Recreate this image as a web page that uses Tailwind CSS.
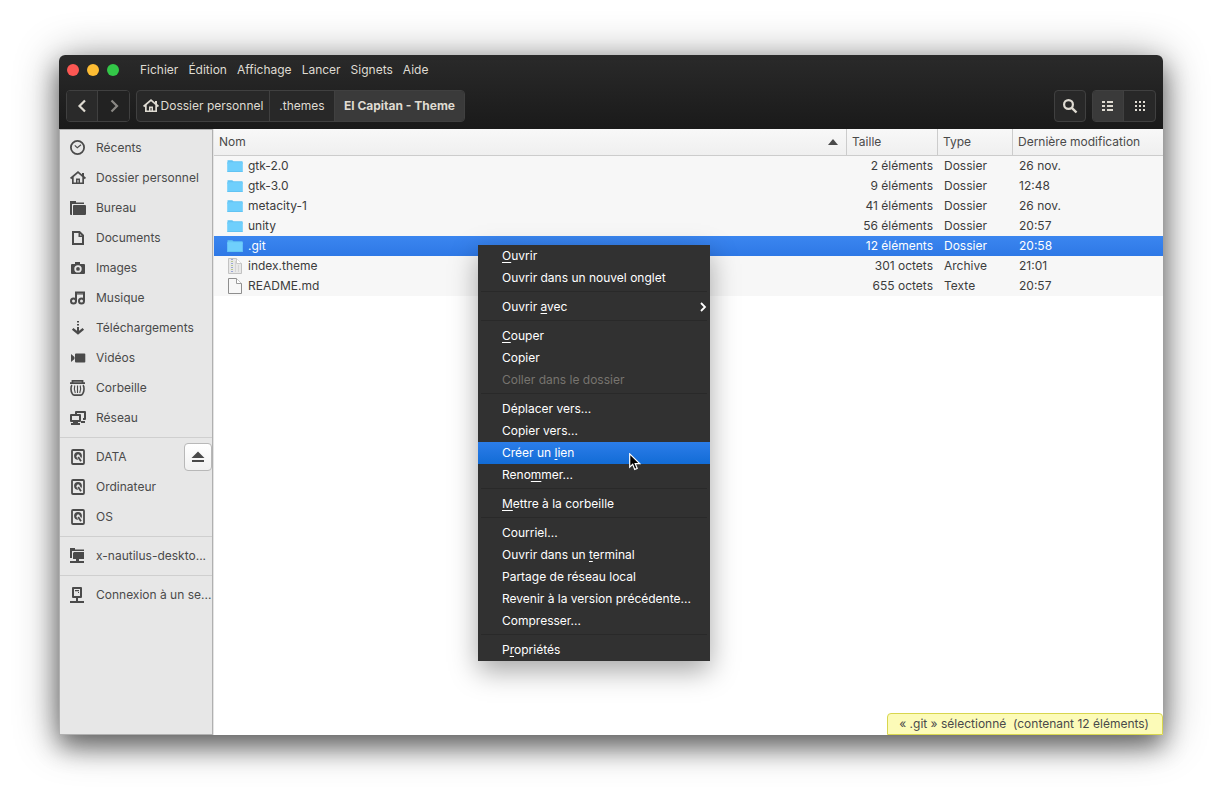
<!DOCTYPE html>
<html lang="fr">
<head>
<meta charset="utf-8">
<title>El Capitan - Theme</title>
<script src="https://cdn.jsdelivr.net/npm/@tailwindcss/browser@4"></script>
</head>
<body class="bg-white">
<!-- Shared symbolic icons -->
<svg class="hidden" aria-hidden="true">
  <symbol id="home" viewBox="0 0 16 16"><path fill="currentColor" fill-rule="evenodd" d="M8 1 0 7.800 1.200 9.200 2 8.500V14h12V8.500l.8.7L16 7.800 14 6.100V3h-2v1.400zM8 3.300l4.300 3.700v5.400H10V8.500H6v3.900H3.700V7zM7.500 10h1v2.400h-1z"/></symbol>
  <symbol id="clock" viewBox="0 0 16 16"><circle cx="7.500" cy="7.500" r="6.600" fill="none" stroke="currentColor" stroke-width="1.800"/><path d="M4.800 5.300 7.300 7.800 11 4.800" fill="none" stroke="currentColor" stroke-width="1.200"/></symbol>
  <symbol id="desk" viewBox="0 0 16 16"><path fill="currentColor" d="M0 1h6v1.500h8V4H2v11H1a1 1 0 0 1-1-1zM4 5h11a1 1 0 0 1 1 1v8a1 1 0 0 1-1 1H3V6a1 1 0 0 1 1-1z"/></symbol>
  <symbol id="doc" viewBox="0 0 16 16"><path d="M3 2h6.500L13 5.500V14H3z" fill="none" stroke="currentColor" stroke-width="2"/><path fill="currentColor" d="M8.500 1H10v4.500h4V7H8.500z"/></symbol>
  <symbol id="cam" viewBox="0 0 16 16"><path fill="currentColor" fill-rule="evenodd" d="M5 2h5v2h4a1 1 0 0 1 1 1v8a1 1 0 0 1-1 1H2a1 1 0 0 1-1-1V5a1 1 0 0 1 1-1h3zM8 5.200a3.700 3.700 0 1 0 0 7.400 3.700 3.700 0 0 0 0-7.400z"/><circle cx="8" cy="8.900" r="1.900" fill="currentColor"/></symbol>
  <symbol id="music" viewBox="0 0 16 16"><path fill="none" stroke="currentColor" stroke-width="2" d="M6 11V2.500h8V11"/><path fill="none" stroke="currentColor" d="M6 4h8"/><circle cx="3.500" cy="11" r="2.500" fill="none" stroke="currentColor" stroke-width="2"/><circle cx="11.500" cy="11" r="2.500" fill="none" stroke="currentColor" stroke-width="2"/></symbol>
  <symbol id="down" viewBox="0 0 16 16"><path fill="currentColor" d="M7 1h2v1.500H7zM7 4h2v1.500H7zM7 7h2v5H7z"/><path d="M2.700 8.800 8 13.200l5.300-4.400" fill="none" stroke="currentColor" stroke-width="2.400"/></symbol>
  <symbol id="video" viewBox="0 0 16 16"><path fill="currentColor" d="M6 3.500h8.500a.8.8 0 0 1 .8.8v7.400a.8.8 0 0 1-.8.8H6a1 1 0 0 1-1-1v-7a1 1 0 0 1 1-1zM1 4l3.500 3v2L1 12z"/></symbol>
  <symbol id="trash" viewBox="0 0 16 16"><path fill="none" stroke="currentColor" stroke-width="1.800" d="M0 3.200h15M2.500 3V.9h10V3"/><path fill="none" stroke="currentColor" stroke-width="1.600" d="M2 5.200C.6 6.500.6 11 2.200 13.600c.5.900 1 1.500 2 1.500h6.600c1 0 1.500-.6 2-1.500C14.400 11 14.400 6.500 13 5.200"/><path fill="none" stroke="currentColor" stroke-width="1.100" d="M4.800 5.500c-.8 2.500-.8 5 .5 7.500M7.500 5.500V13M10.200 5.500c.8 2.500.8 5-.5 7.500"/></symbol>
  <symbol id="net" viewBox="0 0 16 16"><path fill="currentColor" fill-rule="evenodd" d="M6 1h9a1 1 0 0 1 1 1v7a1 1 0 0 1-1 1h-2V8h1V3H7v1H5V2a1 1 0 0 1 1-1zM1 4h9a1 1 0 0 1 1 1v6a1 1 0 0 1-1 1H8v1h2v2H1v-2h2v-1H1a1 1 0 0 1-1-1V5a1 1 0 0 1 1-1zm1 2v4h7V6zM11 11h4v2h-4z"/></symbol>
  <symbol id="disk" viewBox="0 0 16 16"><rect x="2" y="1" width="12" height="14" rx="1" fill="none" stroke="currentColor" stroke-width="1.800"/><circle cx="8" cy="6.800" r="3.900" fill="currentColor"/><path d="M7.500 6.500 11.500 12.500" stroke="#e7e7e7" stroke-width="3.200"/><circle cx="8" cy="6.800" r="1.300" fill="#e7e7e7"/><path d="M8.200 8 11 12.300" stroke="currentColor" stroke-width="1.800"/></symbol>
  <symbol id="share" viewBox="0 0 16 16"><path fill="currentColor" d="M0 0h5v1.500h9V3H2v7H0zM4 4h10v7H9v2h5v2H0v-2h6v-2H3V5z"/></symbol>
  <symbol id="server" viewBox="0 0 16 16"><path fill="currentColor" fill-rule="evenodd" d="M3 0h8a1 1 0 0 1 1 1v9a1 1 0 0 1-1 1H8v3h6v2H0v-2h6v-3H3a1 1 0 0 1-1-1V1a1 1 0 0 1 1-1zm1 2v7h6V2zM5 3h4v1.200H5zM8 5h1v1H8z"/></symbol>
  <symbol id="folder" viewBox="0 0 16 16"><path fill="#62c4f3" d="M.5 2.200h4.700l1.300 1H15.500V6H.5z"/><path fill="#6fcffc" d="M.2 4.200h15.600V13.500a.5.500 0 0 1-.5.500H.7a.5.500 0 0 1-.5-.5z"/><path fill="#5ebff0" d="M.5 13.300h15v.7H.5z"/></symbol>
  <linearGradient id="pg" x1="0" y1="0" x2="0" y2="1"><stop offset="0" stop-color="#fafafa"/><stop offset="1" stop-color="#dedede"/></linearGradient>
  <symbol id="txt" viewBox="0 0 16 16"><path fill="url(#pg)" stroke="#8e8e8e" d="M1.500.5h8l5 5v10h-13z"/><path fill="#fff" stroke="#9a9a9a" d="M9.500.5v5h5"/></symbol>
  <symbol id="arc" viewBox="0 0 16 16"><path fill="#e8e8e8" stroke="#c2c2c2" d="M1.500.5h8l5 5v10h-13z"/><path fill="#fff" stroke="#c8c8c8" d="M9.500.5v5h5"/><path stroke="#9aa6d6" stroke-width="2" stroke-dasharray="1 1" d="M5 1v14"/><path stroke="#b7c794" stroke-width="2" stroke-dasharray="1 3" d="M5 3v12"/><path stroke="#d5d5d5" d="M8.500 3v11M11.500 7v7"/></symbol>
</svg>

<div class="flex h-screen pt-[55px] pr-[62px] pb-[70px] pl-[59px] font-[Inter,sans-serif] text-xs leading-5 text-[#3c3c3c]">
<main class="relative flex min-w-0 flex-1 flex-col rounded-t-md bg-white shadow-[0_12px_24px_rgba(0,0,0,0.45),0_4px_44px_rgba(0,0,0,0.42)]">

  <header class="rounded-t-md bg-linear-to-b from-[#2a2a2a] to-[#1a1a1a] pb-[7px] text-[#dfdbd2]">
    <div class="flex h-[35px] items-center pb-1.5 pl-2">
      <div class="flex gap-2">
        <button aria-label="Fermer" class="size-3 rounded-full bg-[#fc5753]"></button>
        <button aria-label="Réduire" class="size-3 rounded-full bg-[#fdbc33]"></button>
        <button aria-label="Agrandir" class="size-3 rounded-full bg-[#33c748]"></button>
      </div>
      <nav class="ml-[21px] flex gap-2.5">
        <button>Fichier</button><button>Édition</button><button>Affichage</button><button>Lancer</button><button>Signets</button><button>Aide</button>
      </nav>
    </div>
    <div class="flex h-8 gap-1.5 px-[7px]">
      <div class="flex divide-x divide-[#404040] overflow-hidden rounded border border-[#404040]">
        <button aria-label="Précédent" class="flex w-[31px] items-center justify-center bg-[#2a2a2a]"><svg class="size-4" viewBox="0 0 16 16" fill="none" stroke="currentColor" stroke-width="2.200"><path d="M11 2.500 5.500 8l5.500 5.500"/></svg></button>
        <button aria-label="Suivant" class="flex w-[31px] items-center justify-center bg-[#222] text-[#8a8884]"><svg class="size-4" viewBox="0 0 16 16" fill="none" stroke="currentColor" stroke-width="2.200"><path d="M5.500 2.500 11 8l-5.500 5.500"/></svg></button>
      </div>
      <div class="flex divide-x divide-[#404040] overflow-hidden rounded border border-[#404040] bg-[#282828]">
        <button class="flex w-[133px] items-center justify-center gap-0.5"><svg class="size-4"><use href="#home"/></svg>Dossier personnel</button>
        <button class="w-[65px]">.themes</button>
        <button class="w-[129px] bg-[#3a3a3a] font-bold">El Capitan - Theme</button>
      </div>
      <button aria-label="Rechercher" class="ml-auto flex w-8 items-center justify-center rounded border border-[#404040] bg-[#282828]"><svg class="size-4" viewBox="0 0 16 16" fill="none" stroke="currentColor"><circle cx="6.500" cy="6.500" r="4.400" stroke-width="2.200"/><path stroke-width="2.400" d="m9.800 9.800 4.700 4.700"/></svg></button>
      <div class="flex divide-x divide-[#404040] overflow-hidden rounded border border-[#404040] bg-[#282828]">
        <button aria-label="Vue en liste" class="flex w-[31px] items-center justify-center bg-[#3a3a3a]"><svg class="size-4" viewBox="0 0 16 16" fill="currentColor"><path d="M2 3h3v2H2zM7 3h6v2H7zM2 7h3v2H2zM7 7h6v2H7zM2 11h3v2H2zM7 11h6v2H7z"/></svg></button>
        <button aria-label="Vue en icônes" class="flex w-[31px] items-center justify-center"><svg class="size-4" viewBox="0 0 16 16" fill="currentColor"><path d="M3 3h2v2H3zM7 3h2v2H7zM11 3h2v2h-2zM3 7h2v2H3zM7 7h2v2H7zM11 7h2v2h-2zM3 11h2v2H3zM7 11h2v2H7zM11 11h2v2h-2z"/></svg></button>
      </div>
    </div>
  </header>

  <div class="flex min-h-0 flex-1">
    <aside class="w-[154px] shrink-0 overflow-hidden border border-[#b0b0b0] bg-[#e7e7e7] pt-[3px] text-[#4a4a4a]">
      <ul>
        <li><a href="#" class="flex h-[30px] items-center gap-2.5 pl-2.5"><svg class="size-4"><use href="#clock"/></svg>Récents</a></li>
        <li><a href="#" class="flex h-[30px] items-center gap-2.5 pl-2.5"><svg class="size-4"><use href="#home"/></svg>Dossier personnel</a></li>
        <li><a href="#" class="flex h-[30px] items-center gap-2.5 pl-2.5"><svg class="size-4"><use href="#desk"/></svg>Bureau</a></li>
        <li><a href="#" class="flex h-[30px] items-center gap-2.5 pl-2.5"><svg class="size-4"><use href="#doc"/></svg>Documents</a></li>
        <li><a href="#" class="flex h-[30px] items-center gap-2.5 pl-2.5"><svg class="size-4"><use href="#cam"/></svg>Images</a></li>
        <li><a href="#" class="flex h-[30px] items-center gap-2.5 pl-2.5"><svg class="size-4"><use href="#music"/></svg>Musique</a></li>
        <li><a href="#" class="flex h-[30px] items-center gap-2.5 pl-2.5"><svg class="size-4"><use href="#down"/></svg>Téléchargements</a></li>
        <li><a href="#" class="flex h-[30px] items-center gap-2.5 pl-2.5"><svg class="size-4"><use href="#video"/></svg>Vidéos</a></li>
        <li><a href="#" class="flex h-[30px] items-center gap-2.5 pl-2.5"><svg class="size-4"><use href="#trash"/></svg>Corbeille</a></li>
        <li><a href="#" class="flex h-[30px] items-center gap-2.5 pl-2.5"><svg class="size-4"><use href="#net"/></svg>Réseau</a></li>
      </ul>
      <hr class="my-1 border-[#cfcfcf]">
      <ul>
        <li class="flex items-center"><a href="#" class="flex h-[30px] flex-1 items-center gap-2.5 pl-2.5"><svg class="size-4"><use href="#disk"/></svg>DATA</a>
          <button aria-label="Éjecter DATA" class="-my-px flex size-7 items-center justify-center rounded border border-[#b8b8b8] bg-linear-to-b from-white to-[#f1f1f1]"><svg class="size-4" viewBox="0 0 16 16" fill="currentColor"><path d="M8 2.500 14.500 9h-13zM2 11h12v2H2z"/></svg></button></li>
        <li><a href="#" class="flex h-[30px] items-center gap-2.5 pl-2.5"><svg class="size-4"><use href="#disk"/></svg>Ordinateur</a></li>
        <li><a href="#" class="flex h-[30px] items-center gap-2.5 pl-2.5"><svg class="size-4"><use href="#disk"/></svg>OS</a></li>
      </ul>
      <hr class="my-1 border-[#cfcfcf]">
      <a href="#" class="flex h-[30px] items-center gap-2.5 pl-2.5"><svg class="size-4 shrink-0"><use href="#share"/></svg><span class="whitespace-nowrap">x-nautilus-deskto...</span></a>
      <hr class="my-1 border-[#cfcfcf]">
      <a href="#" class="flex h-[30px] items-center gap-2.5 pl-2.5"><svg class="size-4 shrink-0"><use href="#server"/></svg><span class="whitespace-nowrap">Connexion à un se...</span></a>
    </aside>

    <section class="min-w-0 flex-1 border-l border-[#e4e4e4]">
      <table class="w-full table-fixed border-separate border-spacing-0">
        <colgroup><col><col class="w-[91px]"><col class="w-[75px]"><col class="w-[150px]"></colgroup>
        <thead class="bg-linear-to-b from-[#f8f8f8] to-[#efefef] text-left text-[#4a4a4a]">
          <tr class="h-[27px]">
            <th class="border-r border-b border-[#cccccc] pl-[5px] font-normal"><div class="flex items-center justify-between pr-2">Nom<svg class="h-1.5 w-2.5" viewBox="0 0 10 6" fill="#4a4a4a"><path d="M5 0 10 6H0z"/></svg></div></th>
            <th class="border-r border-b border-[#cccccc] pl-[5px] font-normal">Taille</th>
            <th class="border-r border-b border-[#cccccc] pl-[5px] font-normal">Type</th>
            <th class="border-b border-[#cccccc] pl-[5px] font-normal">Dernière modification</th>
          </tr>
        </thead>
        <tbody class="bg-[#f7f7f7]">
          <tr class="h-5"><td class="pl-[13px]"><div class="flex items-center gap-[5px]"><svg class="size-4"><use href="#folder"/></svg>gtk-2.0</div></td><td class="pr-[5px] text-right">2 éléments</td><td class="pl-1.5">Dossier</td><td class="pl-1.5">26 nov.</td></tr>
          <tr class="h-5"><td class="pl-[13px]"><div class="flex items-center gap-[5px]"><svg class="size-4"><use href="#folder"/></svg>gtk-3.0</div></td><td class="pr-[5px] text-right">9 éléments</td><td class="pl-1.5">Dossier</td><td class="pl-1.5">12:48</td></tr>
          <tr class="h-5"><td class="pl-[13px]"><div class="flex items-center gap-[5px]"><svg class="size-4"><use href="#folder"/></svg>metacity-1</div></td><td class="pr-[5px] text-right">41 éléments</td><td class="pl-1.5">Dossier</td><td class="pl-1.5">26 nov.</td></tr>
          <tr class="h-5"><td class="pl-[13px]"><div class="flex items-center gap-[5px]"><svg class="size-4"><use href="#folder"/></svg>unity</div></td><td class="pr-[5px] text-right">56 éléments</td><td class="pl-1.5">Dossier</td><td class="pl-1.5">20:57</td></tr>
          <tr class="h-5 bg-linear-to-b from-[#3b86f0] to-[#2e78e6] text-white"><td class="pl-[13px]"><div class="flex items-center gap-[5px]"><svg class="size-4"><use href="#folder"/></svg>.git</div></td><td class="pr-[5px] text-right">12 éléments</td><td class="pl-1.5">Dossier</td><td class="pl-1.5">20:58</td></tr>
          <tr class="h-5"><td class="pl-[13px]"><div class="flex items-center gap-[5px]"><svg class="size-4"><use href="#arc"/></svg>index.theme</div></td><td class="pr-[5px] text-right">301 octets</td><td class="pl-1.5">Archive</td><td class="pl-1.5">21:01</td></tr>
          <tr class="h-5"><td class="pl-[13px]"><div class="flex items-center gap-[5px]"><svg class="size-4"><use href="#txt"/></svg>README.md</div></td><td class="pr-[5px] text-right">655 octets</td><td class="pl-1.5">Texte</td><td class="pl-1.5">20:57</td></tr>
        </tbody>
      </table>
    </section>
  </div>

  <!-- Floating status -->
  <div class="absolute right-0 bottom-0 rounded-t-sm border border-[#d8d64e] bg-[#fcfbb8] pr-[13px] pl-[11px] whitespace-pre text-[#4a4a4a]">« .git » sélectionné  (contenant 12 éléments)</div>

  <!-- Context menu -->
  <div role="menu" class="absolute top-[190px] left-[419px] flex w-[232px] flex-col bg-[#313131] text-white shadow-[0_10px_26px_rgba(0,0,0,0.35)]">
    <button class="h-[22px] pl-6 text-left"><span class="underline underline-offset-2">O</span>uvrir</button>
    <button class="h-[22px] pl-6 text-left">Ouvrir dans un nouvel onglet</button>
    <hr class="mx-[3px] mt-0.5 mb-1 border-[#292929]">
    <button class="flex h-[22px] items-center justify-between pr-0.5 pl-6 text-left"><span>Ouvrir <span class="underline underline-offset-2">a</span>vec</span><svg class="size-2.5" viewBox="0 0 10 10" fill="none" stroke="currentColor" stroke-width="1.800"><path d="m3 1 4 4-4 4"/></svg></button>
    <hr class="mx-[3px] mt-0.5 mb-1 border-[#292929]">
    <button class="h-[22px] pl-6 text-left"><span class="underline underline-offset-2">C</span>ouper</button>
    <button class="h-[22px] pl-6 text-left">Copier</button>
    <button disabled class="h-[22px] pl-6 text-left text-[#77746f]">Coller dans le dossier</button>
    <hr class="mx-[3px] mt-0.5 mb-1 border-[#292929]">
    <button class="h-[22px] pl-6 text-left">Déplacer vers...</button>
    <button class="h-[22px] pl-6 text-left">Copier vers...</button>
    <button class="h-[22px] bg-linear-to-b from-[#2b7de9] to-[#116cd6] pl-6 text-left">Créer un <span class="underline underline-offset-2">l</span>ien</button>
    <button class="h-[22px] pl-6 text-left">Reno<span class="underline underline-offset-2">m</span>mer...</button>
    <hr class="mx-[3px] mt-0.5 mb-1 border-[#292929]">
    <button class="h-[22px] pl-6 text-left"><span class="underline underline-offset-2">M</span>ettre à la corbeille</button>
    <hr class="mx-[3px] mt-0.5 mb-1 border-[#292929]">
    <button class="h-[22px] pl-6 text-left">Courriel...</button>
    <button class="h-[22px] pl-6 text-left">Ouvrir dans un <span class="underline underline-offset-2">t</span>erminal</button>
    <button class="h-[22px] pl-6 text-left">Partage de réseau local</button>
    <button class="h-[22px] pl-6 text-left">Revenir à la version précédente...</button>
    <button class="h-[22px] pl-6 text-left">Compresser...</button>
    <hr class="mx-[3px] mt-0.5 mb-1 border-[#292929]">
    <button class="h-[22px] pl-6 text-left">P<span class="underline underline-offset-2">r</span>opriétés</button>
  </div>

  <!-- Mouse pointer -->
  <svg class="absolute top-[398px] left-[570px] h-[18px] w-3" viewBox="0 0 12 18"><path d="M.7.900v13.300l3-2.800 2 5 2.500-1-2-4.800h4.500z" fill="#000" stroke="#fff" stroke-width="1.200"/></svg>
</main>
</div>
</body>
</html>
